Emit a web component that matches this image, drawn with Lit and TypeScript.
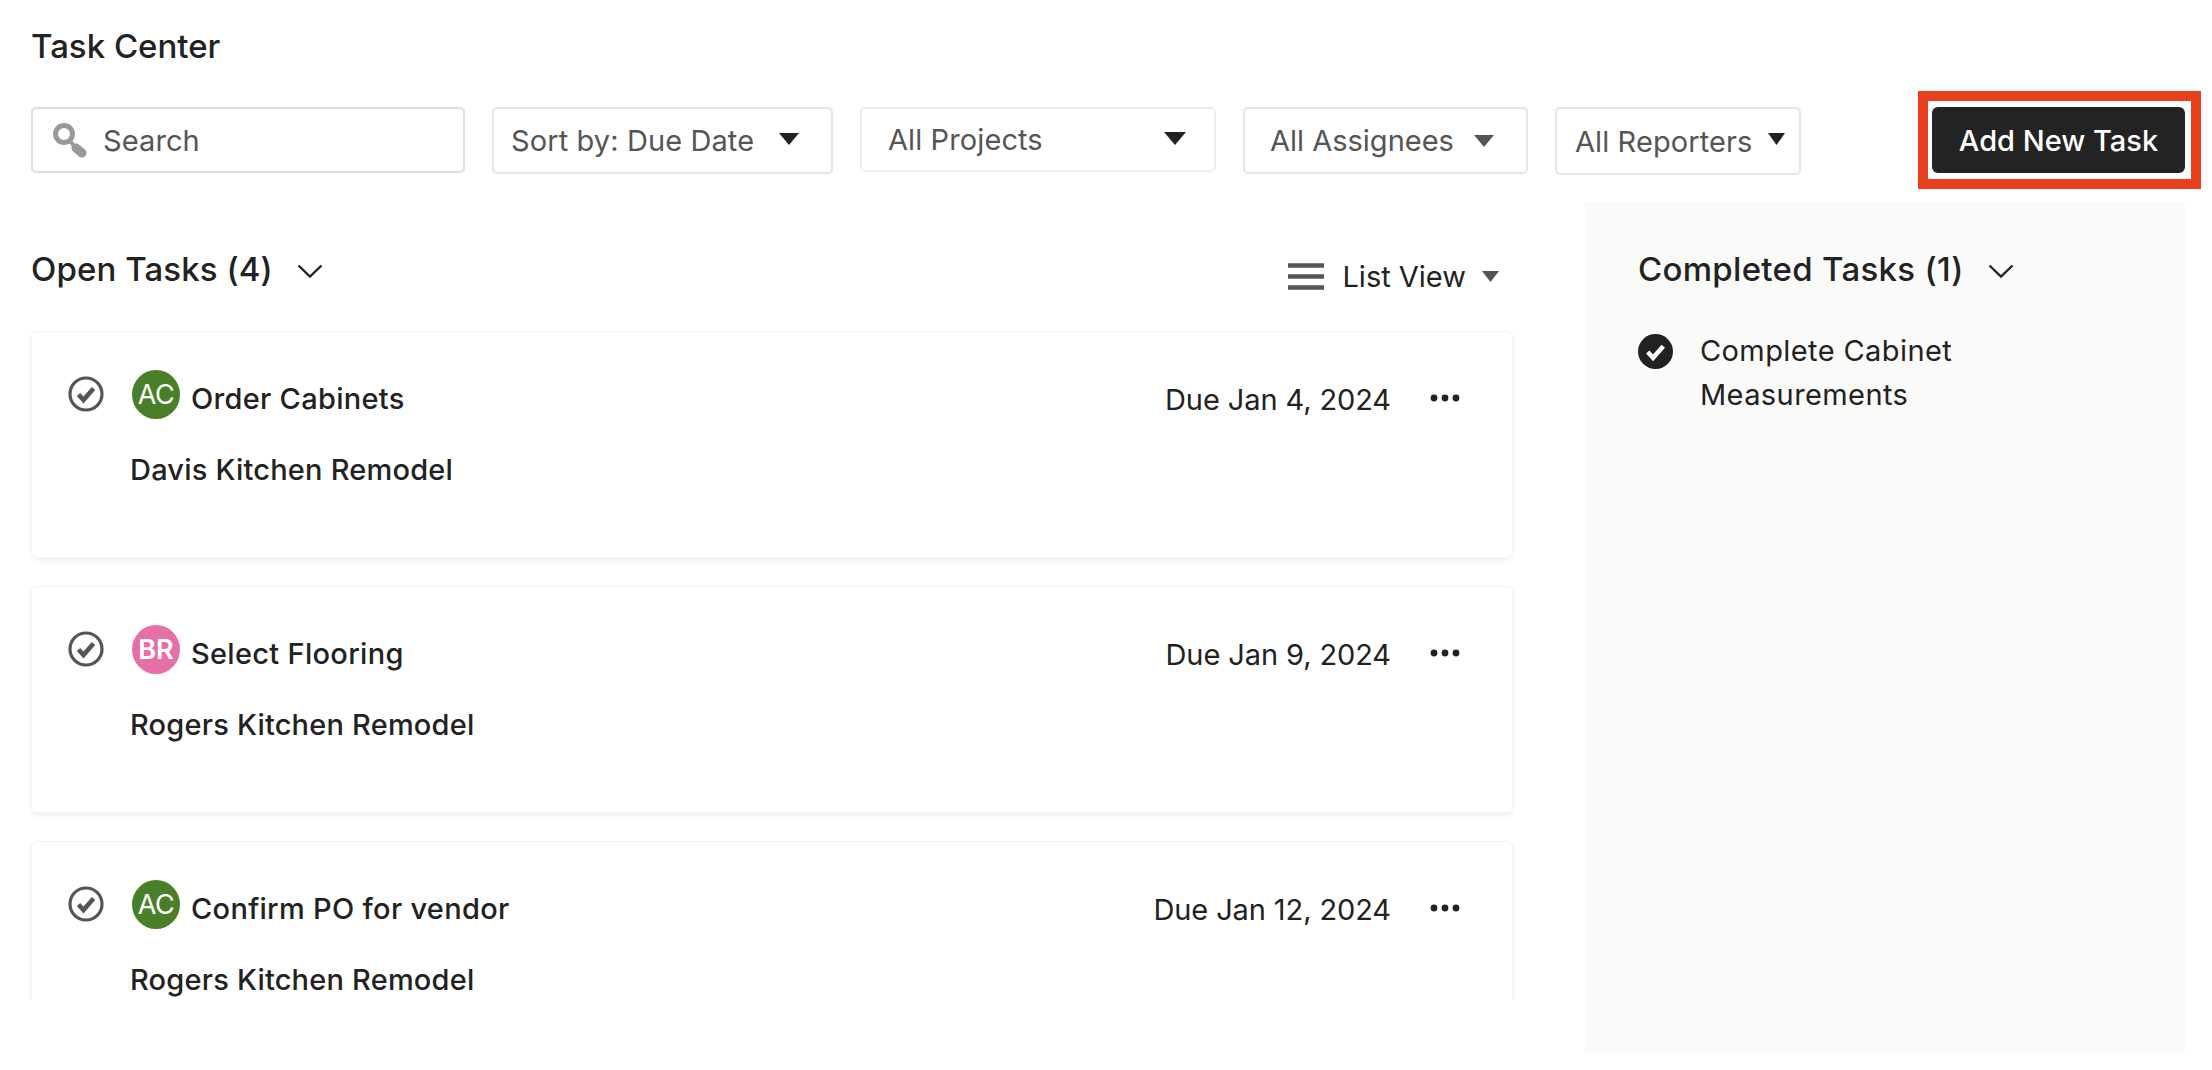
import { LitElement, html, css } from "lit";
import { customElement } from "lit/decorators.js";

const caret = (w: number, h: number, color: string) => html`<svg class="caret" width=${w} height=${h} viewBox="0 0 20 12" preserveAspectRatio="none"><path d="M0 0H20L10 12Z" fill=${color}/></svg>`;
const chevron = html`<svg class="chev" width="26" height="14" viewBox="0 0 26 14"><path d="M1.5 1.5L13 12.5L24.5 1.5" fill="none" stroke="#222" stroke-width="2.4"/></svg>`;

interface Task { initials: string; color: string; title: string; project: string; due: string; }
const tasks: Task[] = [
  { initials: "AC", color: "#4a7f2a", title: "Order Cabinets", project: "Davis Kitchen Remodel", due: "Due Jan 4, 2024" },
  { initials: "BR", color: "#e56fa6", title: "Select Flooring", project: "Rogers Kitchen Remodel", due: "Due Jan 9, 2024" },
  { initials: "AC", color: "#4a7f2a", title: "Confirm PO for vendor", project: "Rogers Kitchen Remodel", due: "Due Jan 12, 2024" },
];

@customElement("app-root")
export class AppRoot extends LitElement {
  static styles = css`
    :host { display: block; width: 2212px; height: 1070px; overflow: hidden; background: #fff; font-family: "Inter", "Liberation Sans", sans-serif; color: #222; }
    .page { padding: 26px 27px 0 31px; display: flex; flex-direction: column; }
    h1 { margin: 0; font-size: 33px; line-height: 40px; font-weight: 500; letter-spacing: 0; }
    .toolbar { margin-top: 41px; display: flex; align-items: flex-start; gap: 27px; }
    .field { box-sizing: border-box; height: 67px; border: 2px solid #e6e6dd; border-radius: 5px; display: flex; align-items: center; font-size: 29px; color: #555; letter-spacing: 0.1px; background: #fff; }
    .search { width: 434px; height: 66px; padding-left: 20px; gap: 14px; border-color: #deded2; }
    .sort { width: 341px; padding-left: 17px; }
    .projects { width: 356px; height: 65px; padding-left: 26px; border-color: #eeeeea; }
    .assignees { width: 285px; padding-left: 25px; }
    .assignees span { letter-spacing: 0; }
    .reporters { width: 246px; height: 68px; padding-left: 18px; }
    .field .caret { margin-left: auto; }
    .sort .caret { margin-right: 32px; margin-top: -3px; }
    .projects .caret { margin-right: 28px; margin-top: -3px; }
    .assignees .caret { margin-right: 32px; }
    .reporters .caret { margin-right: 14px; margin-top: -4px; }
    .btn-wrap { margin-left: auto; position: relative; }
    .btn { box-sizing: border-box; display: flex; align-items: center; justify-content: center; width: 253px; height: 66px; border: 0; border-radius: 6px; background: #232323; color: #fff; font: 500 29px "Inter", sans-serif; letter-spacing: 0; padding: 0; }
    .highlight { position: absolute; left: -14px; right: -16px; top: -16px; bottom: -16px; border: 10px solid #e8401f; pointer-events: none; }
    .body { margin-top: 27px; display: flex; align-items: flex-start; }
    .left { width: 1482px; margin-right: 72px; }
    .section-head { height: 40px; display: flex; align-items: center; font-size: 33px; font-weight: 500; letter-spacing: 0.1px; }
    .panel .section-head { letter-spacing: 0.3px; }
    .section-head .chev { margin-left: 24px; margin-top: 4px; }
    .left-head { margin-top: 47px; margin-bottom: 36px; }
    .view { margin-left: auto; display: flex; align-items: center; font-size: 29px; font-weight: 400; letter-spacing: 0; margin-top: 14px; margin-right: 14px; }
    .view .lines { margin-right: 18px; }
    .view .caret { margin-left: 16px; margin-top: 0; }
    .list { height: 668px; overflow: hidden; margin: 0 -8px; padding: 6px 8px 0; display: flex; flex-direction: column; gap: 28px; }
    .card { box-sizing: border-box; flex: none; height: 227px; border: 1px solid #f4f4f2; border-radius: 6px; box-shadow: 0 3px 5px rgba(0,0,0,.06); padding: 38px 52px 0 36px; background: #fff; }
    .row { display: flex; align-items: flex-start; }
    .check { margin-top: 6px; margin-right: 28px; flex: none; }
    .avatar { flex: none; width: 48px; height: 49px; border-radius: 50%; display: flex; align-items: center; justify-content: center; color: #fff; font-size: 27px; letter-spacing: -0.5px; }
    .avatar.strong { font-weight: 600; letter-spacing: 0; }
    .title { margin: 11px 0 0 11px; font-size: 29px; line-height: 36px; font-weight: 500; letter-spacing: 0.3px; }
    .due { margin: 12px 39px 0 auto; font-size: 29px; line-height: 36px; letter-spacing: -0.1px; }
    .dots { margin-top: 24px; flex: none; }
    .project { margin: 33px 0 0 62px; font-size: 29px; line-height: 36px; font-weight: 500; letter-spacing: 0.2px; }
    .panel { box-sizing: border-box; width: 600px; height: 851px; background: #fafaf9; padding: 47px 53px 0; }
    .done { margin-top: 45px; display: flex; align-items: flex-start; gap: 27px; font-size: 29px; line-height: 44px; letter-spacing: 0.4px; }
    .done svg { flex: none; }
    .done span { width: 320px; margin-top: -5px; }
  `;

  render() {
    return html`<div class="page">
      <h1>Task Center</h1>
      <div class="toolbar">
        <div class="field search">
          <svg width="36" height="36" viewBox="0 0 36 36"><circle cx="11" cy="12" r="8.5" fill="none" stroke="#999" stroke-width="5"/><path d="M16 18L23 26" stroke="#999" stroke-width="4"/><path d="M23 26L29 31" stroke="#999" stroke-width="9" stroke-linecap="round"/></svg>
          <span>Search</span>
        </div>
        <div class="field sort"><span>Sort by: Due Date</span>${caret(20, 12, "#222")}</div>
        <div class="field projects"><span>All Projects</span>${caret(22, 13, "#222")}</div>
        <div class="field assignees"><span>All Assignees</span>${caret(20, 12, "#555")}</div>
        <div class="field reporters"><span>All Reporters</span>${caret(17, 12, "#222")}</div>
        <div class="btn-wrap"><button class="btn">Add New Task</button><span class="highlight"></span></div>
      </div>
      <div class="body">
        <div class="left">
          <div class="section-head left-head">
            <span>Open Tasks (4)</span>${chevron}
            <div class="view">
              <svg class="lines" width="36" height="27" viewBox="0 0 36 27"><path d="M0 2.5H36M0 13.5H36M0 24.5H36" stroke="#555" stroke-width="4.5"/></svg>
              <span>List View</span>${caret(17, 11, "#555")}
            </div>
          </div>
          <div class="list">
            ${tasks.map((t) => html`<div class="card">
              <div class="row">
                <svg class="check" width="36" height="36" viewBox="0 0 36 36"><circle cx="18" cy="18" r="16" fill="none" stroke="#555" stroke-width="3.2"/><path d="M10.5 18.5L15.5 24L25.5 12.5" fill="none" stroke="#555" stroke-width="4.6"/></svg>
                <div class="avatar ${t.initials === "BR" ? "strong" : ""}" style="background:${t.color}">${t.initials}</div>
                <div class="title">${t.title}</div>
                <div class="due">${t.due}</div>
                <svg class="dots" width="30" height="8" viewBox="0 0 30 8"><circle cx="4" cy="4" r="3.4" fill="#222"/><circle cx="15" cy="4" r="3.4" fill="#222"/><circle cx="26" cy="4" r="3.4" fill="#222"/></svg>
              </div>
              <div class="project">${t.project}</div>
            </div>`)}
          </div>
        </div>
        <div class="panel">
          <div class="section-head"><span>Completed Tasks (1)</span>${chevron}</div>
          <div class="done">
            <svg width="35" height="35" viewBox="0 0 36 36"><circle cx="18" cy="18" r="18" fill="#222"/><path d="M10 18.5L15.5 24.5L26 12.5" fill="none" stroke="#fff" stroke-width="4.6"/></svg>
            <span>Complete Cabinet Measurements</span>
          </div>
        </div>
      </div>
    </div>`;
  }
}
